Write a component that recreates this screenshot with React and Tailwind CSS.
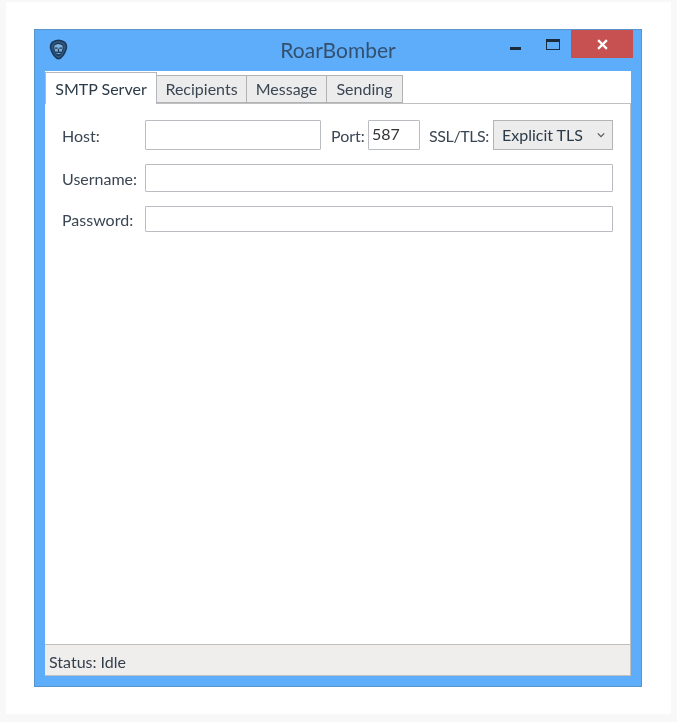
import { useState } from 'react'

function LionIcon() {
 return (
  <svg viewBox="0 0 24 24" className="w-[21px] h-[23px]" fill="none" stroke="#1b3856" strokeWidth="1.800">
   <path d="M12 1.500c2 0 3 .7 4.500 1 2 .6 4 2.500 4.500 5 .4 2-.2 4.500-1 6-.8 2-1.500 3.500-3 5.500-1.500 2-3 3.500-5 3.500s-3.500-1.500-5-3.500c-1.500-2-2.200-3.500-3-5.500-.8-1.500-1.400-4-1-6 .5-2.500 2.500-4.400 4.500-5C9 2.200 10 1.500 12 1.500z" fill="#2f5880" />
   <path d="M7 7c2-1.500 3.500-2 5-2s3 .5 5 2c.7 2 .4 4.500-.5 6.500-.8 2.500-2.500 5-4.500 5s-3.700-2.500-4.500-5C6.600 11.500 6.300 9 7 7z" fill="#7fb2e0" strokeWidth="1.200" />
   <path d="M8 10.500h3M16 10.500h-3M12 11v3.500M9 14.500c1 1.500 2 1 3 0 1 1 2 1.500 3 0M10 17.500c1 .8 3 .8 4 0" strokeWidth="1.500" />
  </svg>
 )
}

function Field({ className = '', value = '' }) {
 return (
  <div className={`shrink-0 border border-[#b9bcc0] bg-white rounded-[1px] flex items-center px-[3px] text-[#333] ${className}`}>
   {value}
  </div>
 )
}

export default function App() {
 const [tab, setTab] = useState('SMTP Server')
 const tabs = [
  { name: 'SMTP Server', w: 'w-[112px]' },
  { name: 'Recipients', w: 'w-[91px]' },
  { name: 'Message', w: 'w-[81px]' },
  { name: 'Sending', w: 'w-[77px]' },
 ]

 return (
  <div className="w-[677px] h-[722px] bg-[#f8f8f8] pt-[2px] pl-[6px] overflow-hidden" style={{ fontFamily: 'Lato, "Open Sans", sans-serif' }}>
   <div className="w-[665px] h-[712px] bg-white pt-[27px] pl-[28px]">
    <div className="w-[608px] h-[658px] bg-[#5eadfb] border border-[#5a94cc] flex flex-col blur-[0.5px]">
     {/* title bar */}
     <div className="h-[41px] flex items-center relative shrink-0">
      <div className="absolute left-[13px] top-[8px]"><LionIcon /></div>
      <div className="flex-1 text-center text-[21px] text-[#33516f] pb-[1px]">RoarBomber</div>
      <div className="absolute left-[475px] top-[17px] w-[11px] h-[3px] bg-[#1c2c3c]" />
      <div className="absolute left-[511px] top-[9px] w-[14px] h-[11px] border border-[#1c2c3c] border-t-[3px]" />
      <div className="absolute left-[536px] top-0 w-[62px] h-[28px] bg-[#c75050] flex items-center justify-center">
       <svg viewBox="0 0 10 10" className="w-[11px] h-[11px]" stroke="white" strokeWidth="2">
        <path d="M1 1l8 8M9 1l-8 8" />
       </svg>
      </div>
     </div>

     {/* client area */}
     <div className="w-[586px] h-[605px] ml-[10px] flex flex-col bg-white">
      <div className="h-[32px] flex items-end shrink-0 relative">
       {tabs.map(t => (
        <button
         key={t.name}
         type="button"
         onClick={() => setTab(t.name)}
         className={t.name === tab
          ? `${t.w} h-[32px] text-[16px] text-[#2b3a48] bg-white border-t border-l border-r border-[#b5b9bd] relative z-10 -mb-px`
          : `${t.w} h-[28px] text-[16px] text-[#3a4653] bg-[#ececec] border border-[#b0b2b4] -ml-px first:ml-0`}
        >
         {t.name}
        </button>
       ))}
      </div>

      <div className="flex-1 border-t border-[#c0c0c0] border-r pt-[16px] pl-[17px] pr-[17px] text-[16px] text-[#3a4653]">
       <div className="flex items-center h-[30px]">
        <span className="w-[83px] shrink-0 pt-[2px]">Host:</span>
        <Field className="w-[176px] h-[30px]" />
        <span className="w-[37px] shrink-0 ml-[10px] pt-[2px]">Port:</span>
        <Field className="w-[52px] h-[30px] pb-[2px]" value="587" />
        <span className="ml-[9px] pt-[2px] whitespace-nowrap tracking-[-0.4px]">SSL/TLS:</span>
        <div className="w-[120px] h-[30px] shrink-0 ml-auto border border-[#b4b4b4] bg-[#ececec] flex items-center pl-[8px] text-[#2b3a48]">
         Explicit TLS
         <svg viewBox="0 0 10 10" className="w-[8px] h-[8px] ml-[14px]" fill="none" stroke="#555" strokeWidth="1.500">
          <path d="M1 3l4 4 4-4" />
         </svg>
        </div>
       </div>
       <div className="flex items-center h-[28px] mt-[14px]">
        <span className="w-[83px] shrink-0 pt-[1px]">Username:</span>
        <Field className="flex-1 h-[28px]" />
       </div>
       <div className="flex items-center h-[26px] mt-[14px]">
        <span className="w-[83px] shrink-0 pt-[1px]">Password:</span>
        <Field className="flex-1 h-[26px]" />
       </div>
      </div>

      <div className="h-[32px] shrink-0 bg-[#f0eded] border-t border-[#c0c0c0] border-r border-b flex items-center pl-[4px] pt-[3px] text-[16px] text-[#333f4b]">
       Status: Idle
      </div>
     </div>
    </div>
   </div>
  </div>
 )
}
